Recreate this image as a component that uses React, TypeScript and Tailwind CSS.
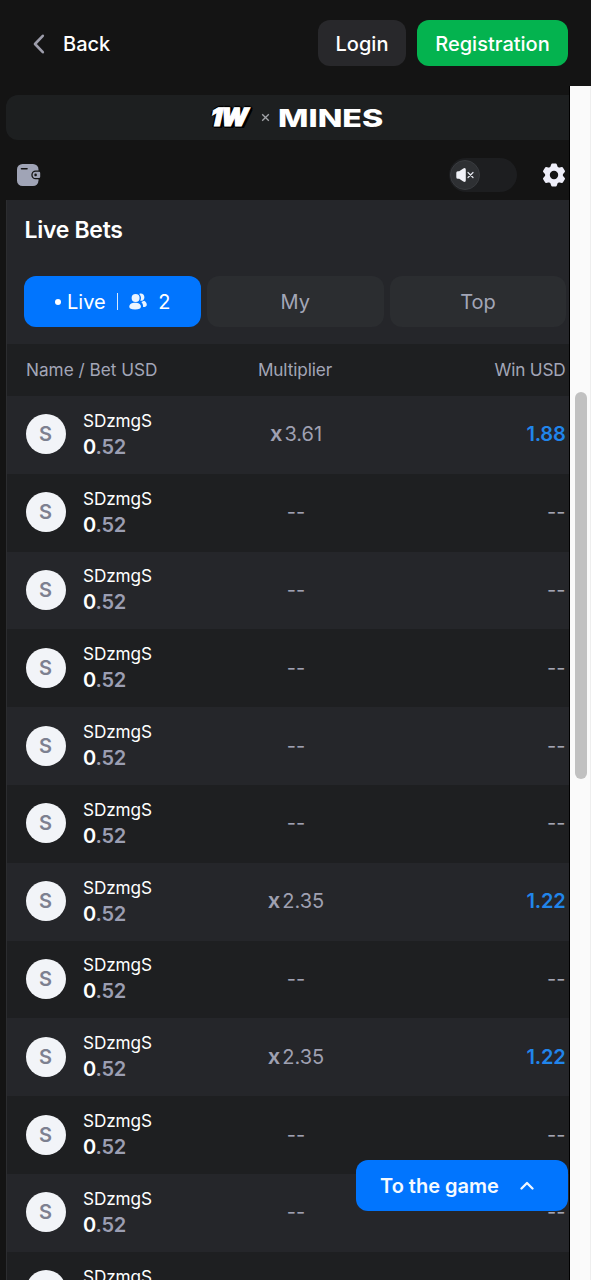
import React from "react";

type Bet = { name: string; multiplier?: string; win?: string };

const bets: Bet[] = [
  { name: "SDzmgS", multiplier: "3.61", win: "1.88" },
  { name: "SDzmgS" },
  { name: "SDzmgS" },
  { name: "SDzmgS" },
  { name: "SDzmgS" },
  { name: "SDzmgS" },
  { name: "SDzmgS", multiplier: "2.35", win: "1.22" },
  { name: "SDzmgS" },
  { name: "SDzmgS", multiplier: "2.35", win: "1.22" },
  { name: "SDzmgS" },
  { name: "SDzmgS" },
  { name: "SDzmgS" },
];

function Header() {
  return (
    <header className="flex h-[86px] shrink-0 items-start justify-between bg-[#141414] pt-5 pr-[23px] pl-8">
      <button className="flex h-[47px] items-center gap-[16px] text-[20px] font-medium text-white">
        <svg width="15" height="22" viewBox="0 0 15 22" fill="none">
          <path d="M10.8 2.8 L3 11 L10.8 19.2" stroke="#9d9dab" strokeWidth="2.6" strokeLinecap="round" strokeLinejoin="round" />
        </svg>
        Back
      </button>
      <div className="flex gap-[11px] text-[20px] font-medium text-white">
        <button className="h-[46px] w-[88px] rounded-[12px] bg-[#28282b] pt-px">Login</button>
        <button className="h-[46px] w-[151px] rounded-[12px] bg-[#04b34f] pt-px">Registration</button>
      </div>
    </header>
  );
}

function Brand() {
  return (
    <div className="mt-[9px] flex h-[45px] shrink-0 items-center rounded-l-[12px] bg-[#1d1f20] pl-[205px] text-white">
      <span className="w-[40px] origin-left -skew-x-12 text-[25px] leading-none font-black tracking-[-0.9px] [-webkit-text-stroke:1.2px_white] [text-shadow:1px_0_0_#000,2px_1px_0_#000,3px_2px_0_#000,3px_0_0_#000,2px_-1px_0_#000,-2px_1px_0_#000,0_-2px_0_#000,0_2px_0_#000]">
        1W
      </span>
      <svg className="mr-[7px] ml-[9px]" width="11" height="11" viewBox="0 0 10 10">
        <path d="M2 2 L8 8 M8 2 L2 8" stroke="#a2a4a8" strokeWidth="1.2" />
      </svg>
      <span className="origin-left scale-x-[1.29] pt-px text-[25px] leading-none font-extrabold">MINES</span>
    </div>
  );
}

function Controls() {
  return (
    <div className="flex h-[60px] shrink-0 items-center justify-between pt-[9px] pr-[3px] pl-[11px]">
      <svg width="24" height="22" viewBox="0 0 24 22">
        <rect x="0" y="0" width="21.5" height="22" rx="5.5" fill="#a0a4b6" />
        <path d="M4.5 4.8 H10" stroke="#141414" strokeWidth="1.6" strokeLinecap="round" />
        <path d="M24 6.6 H18.6 A4.3 4.3 0 0 0 18.6 15.2 H24 Z" fill="#141414" />
        <path d="M22 7.8 H18.7 A3.1 3.1 0 0 0 18.7 14 H22 Q23.2 14 23.2 12.8 V9 Q23.2 7.8 22 7.8 Z" fill="#a0a4b6" />
        <circle cx="18.6" cy="10.9" r="1.3" fill="#141414" />
      </svg>
      <div className="flex items-center gap-[25px]">
        <div className="flex h-[34px] w-[68px] items-center rounded-full bg-[#1d1e20] pl-px">
          <div className="flex size-[30px] items-center justify-center rounded-full border border-[#393b3f] bg-[#2e3033]">
            <svg width="20" height="16" viewBox="0 0 20 16">
              <path d="M2.8 4.3 H4.2 L8.3 1.4 Q10.8 0.2 10.8 2.8 V13.2 Q10.8 15.8 8.3 14.6 L4.2 11.7 H2.8 Q1.3 11.7 1.3 10.2 V5.8 Q1.3 4.3 2.8 4.3 Z" fill="#f1f2f8" />
              <path d="M13 5.5 L18 10.5 M18 5.5 L13 10.5" stroke="#e3e5ed" strokeWidth="1.2" strokeLinecap="round" />
            </svg>
          </div>
        </div>
        <svg width="24" height="24" viewBox="0 0 24 24" fill="#eeeef9">
          <path
            fillRule="evenodd"
            stroke="#eeeef9"
            strokeWidth="2"
            strokeLinejoin="round"
            d="M10.2 1.6 H13.8 L14.9 4.6 L16.8 5.7 L20 5.1 L22 8.3 L19.9 10.9 V13.1 L22 15.7 L20 18.9 L16.8 18.3 L14.9 19.4 L13.8 22.4 H10.2 L9.1 19.4 L7.2 18.3 L4 18.9 L2 15.7 L4.1 13.1 V10.9 L2 8.3 L4 5.1 L7.2 5.7 L9.1 4.6 Z M12 6.8 A5.2 5.2 0 1 0 12 17.2 A5.2 5.2 0 1 0 12 6.8 Z"
          />
        </svg>
      </div>
    </div>
  );
}

function UsersIcon() {
  return (
    <svg width="18" height="18" viewBox="0 0 18 18" fill="#eaf4ff">
      <circle cx="6.6" cy="5" r="4" />
      <path d="M0.3 13.7 C0.3 11.3 2.7 9.8 6.1 9.8 C9.5 9.8 11.9 11.3 11.9 13.7 C11.9 15.6 10.1 16.4 6.1 16.4 C2.1 16.4 0.3 15.6 0.3 13.7 Z" />
      <path d="M10.2 0.9 C13 -0.1 15.4 1.6 15.4 4.2 C15.4 6.6 13.6 8.2 11.2 7.8 C12.5 5.6 12.2 2.8 10.2 0.9 Z" />
      <path d="M12.3 9 L15.2 7.8 C16.7 8.7 17.8 10.3 17.8 11.8 C17.8 13.3 16.5 14.1 14.1 14.1 C14.2 11.9 13.6 10.2 12.3 9 Z" />
    </svg>
  );
}

function Tabs() {
  return (
    <div className="mt-[16px] grid h-[51px] shrink-0 grid-cols-3 gap-[6px] pr-[2px] pl-[17px] text-[20px] text-[#a3a6b7]">
      <button className="flex items-center rounded-[12px] bg-[#0175fe] pl-[31px] text-white">
        <span className="mr-[6px] size-[6px] rounded-full bg-white" />
        <span>Live</span>
        <span className="mr-[11px] ml-[11px] h-[17px] w-[1.5px] bg-[#d6e9ff]" />
        <UsersIcon />
        <span className="ml-[11px]">2</span>
      </button>
      <button className="rounded-[12px] bg-[#2b2d30]">My</button>
      <button className="rounded-[12px] bg-[#2b2d30]">Top</button>
    </div>
  );
}

function BetRow({ bet }: { bet: Bet }) {
  return (
    <div className="grid h-[77.8px] shrink-0 grid-cols-[190px_158px_1fr] items-center pr-[3px] pb-px pl-[18.5px] odd:bg-[#25262a] even:bg-[#1e1f21]">
      <div className="flex items-center gap-[17.5px]">
        <span className="flex size-[40px] items-center justify-center rounded-full bg-[#f2f4f8] text-[20px] font-semibold text-[#7d8090]">
          {bet.name[0]}
        </span>
        <div>
          <div className="text-[17.2px] leading-[26px] tracking-[-0.1px] text-white">{bet.name}</div>
          <div className="text-[20px] leading-[27px] font-semibold tracking-[-0.2px] text-[#9b9eb2]">
            <span className="text-white">0</span>.52
          </div>
        </div>
      </div>
      <div className="flex items-baseline justify-center gap-[2px] pl-[3px] text-[20px] leading-[28px] text-[#9fa0b1]">
        {bet.multiplier ? (
          <>
            <span className="text-[22px] leading-[20px] font-semibold">x</span>
            <span>{bet.multiplier}</span>
          </>
        ) : (
          <span>--</span>
        )}
      </div>
      <div className="text-right text-[20px] text-[#a3a4b2]">
        {bet.win ? <span className="font-semibold tracking-[-0.2px] text-[#2185eb]">{bet.win}</span> : "--"}
      </div>
    </div>
  );
}

export default function App() {
  return (
    <div className="relative flex h-[1280px] w-[591px] flex-col overflow-hidden bg-[#141414] font-['Inter',sans-serif]">
      <Header />
      <div className="flex min-h-0 flex-1">
        <main className="flex w-[569.5px] shrink-0 flex-col border-r border-black pl-[6px]">
          <Brand />
          <Controls />
          <section className="flex min-h-0 flex-1 flex-col overflow-hidden border-l border-[#2c2d30] bg-[#25262a]">
            <h1 className="h-[60px] shrink-0 pl-[17.5px] text-[23px] leading-[60px] font-semibold tracking-[-0.3px] text-white">Live Bets</h1>
            <Tabs />
            <div className="mt-[17px] grid h-[52px] shrink-0 grid-cols-[190px_158px_1fr] items-center bg-[#1e1f21] pr-[3px] pl-[19px] text-[17.2px] text-[#a3a6b7]">
              <span>Name / Bet USD</span>
              <span className="text-center tracking-[-0.1px]">Multiplier</span>
              <span className="text-right tracking-[-0.2px]">Win USD</span>
            </div>
            <div className="flex flex-col">
              {bets.map((bet, i) => (
                <BetRow key={i} bet={bet} />
              ))}
            </div>
          </section>
        </main>
        <aside className="flex-1 border-r border-[#eeeeee] bg-[#fafafa] pt-[306px] pl-[5.5px]">
          <div className="h-[387px] w-[12px] rounded-full bg-[#c1c1c1]" />
        </aside>
      </div>
      <button className="absolute top-[1160px] left-[356px] flex h-[51px] w-[212px] items-center rounded-[12px] bg-[#0175fe] pl-[24px] text-[20px] font-semibold text-[#f5faff]">
        To the game
        <svg className="ml-[21px]" width="14" height="10" viewBox="0 0 14 10" fill="none">
          <path d="M1.5 7.5 L7 2 L12.5 7.5" stroke="#f0f7ff" strokeWidth="2.3" strokeLinecap="round" strokeLinejoin="round" />
        </svg>
      </button>
    </div>
  );
}
